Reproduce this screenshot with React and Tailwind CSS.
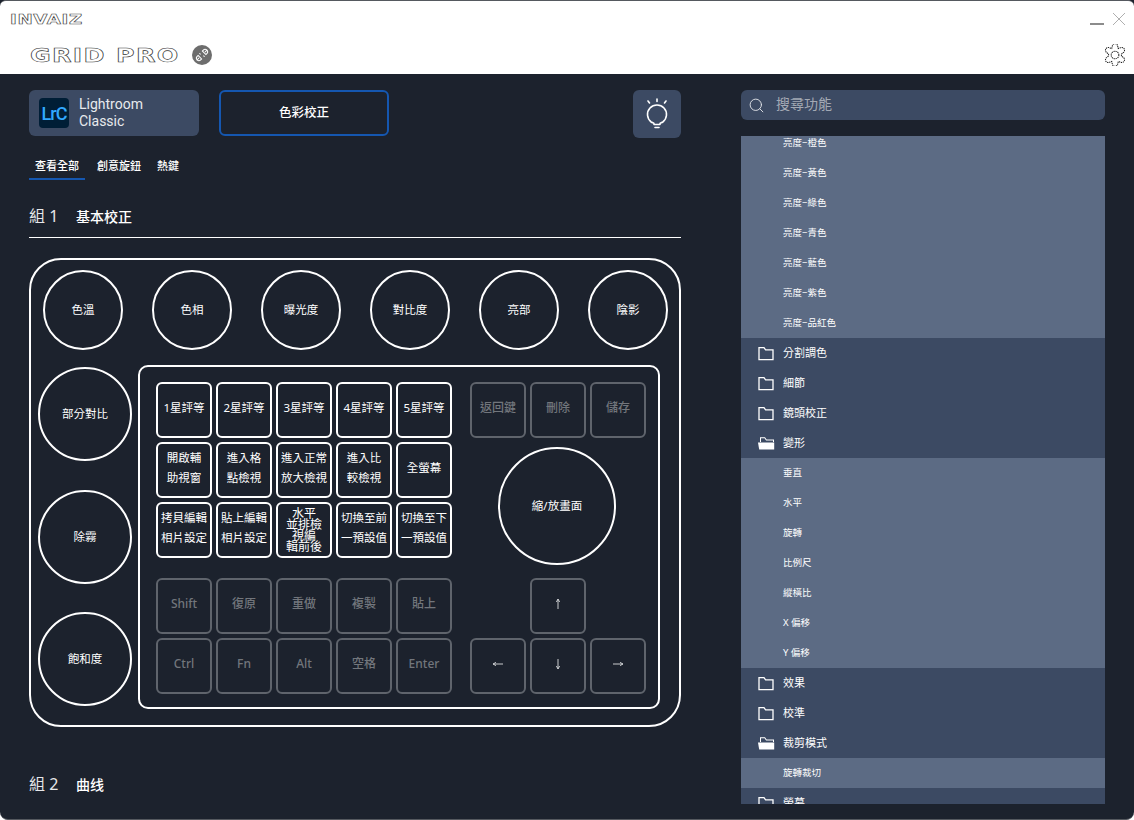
import React from "react";
import { Search } from "lucide-react";

const cjk = "font-['Noto_Sans','Noto_Sans_CJK_TC',sans-serif]";

const knobs = ["色溫", "色相", "曝光度", "對比度", "亮部", "陰影"];
const sideKnobs = ["部分對比", "除霧", "飽和度"];

const mainKeys = [
    [["1星評等"], ["2星評等"], ["3星評等"], ["4星評等"], ["5星評等"]],
    [["開啟輔", "助視窗"], ["進入格", "點檢視"], ["進入正常", "放大檢視"], ["進入比", "較檢視"], ["全螢幕"]],
    [["拷貝編輯", "相片設定"], ["貼上編輯", "相片設定"], null, ["切換至前", "一預設值"], ["切換至下", "一預設值"]],
];
const dimKeys = [
    ["Shift", "復原", "重做", "複製", "貼上"],
    ["Ctrl", "Fn", "Alt", "空格", "Enter"],
];

const listRows = [
    ["sub", "亮度−橙色"], ["sub", "亮度−黃色"], ["sub", "亮度−綠色"], ["sub", "亮度−青色"],
    ["sub", "亮度−藍色"], ["sub", "亮度−紫色"], ["sub", "亮度−品紅色"],
    ["cat", "分割調色"], ["cat", "細節"], ["cat", "鏡頭校正"], ["open", "變形"],
    ["sub", "垂直"], ["sub", "水平"], ["sub", "旋轉"], ["sub", "比例尺"], ["sub", "縱橫比"], ["sub", "X 偏移"], ["sub", "Y 偏移"],
    ["cat", "效果"], ["cat", "校準"], ["open", "裁剪模式"], ["sub", "旋轉裁切"], ["cat", "螢幕"],
];

const Key = ({ lines, dim, children }) => (
    <div className={`w-14 h-14 shrink-0 rounded-md border-2 pb-1 flex flex-col items-center justify-center leading-[20px] ${dim ? "border-[#5f646c] text-[#72767c] text-[12px] font-medium" : "border-white text-white text-[11.5px]"}`}>
        {lines && lines.map((l) => <span key={l} className="whitespace-nowrap">{l}</span>)}
        {children}
    </div>
);

const Arrow = ({ d }) => (
    <svg viewBox="0 0 16 16" className="w-4 h-4 text-[#c9cbce]" fill="none" stroke="currentColor" strokeWidth="1">
        <path d={d} />
    </svg>
);

const FolderClosed = () => (
    <svg viewBox="0 0 16 15" className="w-4 h-[15px] shrink-0" fill="none" stroke="white" strokeWidth="1.3">
        <path d="M1 13.6V1.6h5l1.6 2.2H15v9.8z" />
    </svg>
);

const FolderOpen = () => (
    <svg viewBox="0 0 17 15" className="w-[17px] h-[15px] shrink-0" fill="white">
        <path d="M2 6V1.2h5l1.6 2.2H16V6h-1V4.4H8.1L6.5 2.2H3V6z" />
        <path d="M0 6.5h16.2v6.9H1.2z" />
    </svg>
);

const Gear = () => (
    <svg viewBox="0 0 24 24" className="w-[22px] h-[22px]" fill="none" stroke="#1f1f1f" strokeWidth="1.1" strokeDasharray="1.4 0.8">
        <path d="M9 2.6a3 3 0 0 1 6 0l.6 2.3 2.3-.7a3 3 0 0 1 3 5.2L19 11v2l1.9 1.6a3 3 0 0 1-3 5.2l-2.3-.7-.6 2.3a3 3 0 0 1-6 0l-.6-2.3-2.3.7a3 3 0 0 1-3-5.2L5 13v-2L3.1 9.4a3 3 0 0 1 3-5.2l2.3.7z" />
        <circle cx="12" cy="12" r="4.2" />
    </svg>
);

const Bulb = () => (
    <svg viewBox="0 0 24 32" className="w-6 h-8" fill="none" stroke="white" strokeWidth="1.6" strokeLinecap="round">
        <path d="M12 1v2.5M3 3l1.5 2M21 3l-1.5 2" />
        <path d="M9 25.5C8.7 25 7.5 24.8 6.17 24A9.5 9.5 0 1 1 17.83 24C16.5 24.8 15.3 25 15 25.5" />
        <path d="M9 26.5h6M10 29.5h4" />
    </svg>
);

const Plug = () => (
    <div className="w-5 h-5 rounded-full bg-[#6d6d6d] flex items-center justify-center ml-3">
        <svg viewBox="0 0 16 16" className="w-3.5 h-3.5" fill="none" stroke="white" strokeWidth="1.2">
            <path d="M2 14l2.6-2.6M14 2l-2.6 2.6M6.4 7.4L5 6M9.6 8.6L11 10" />
            <path d="M3.5 8.5l4 4-1 1a2.4 2.4 0 0 1-4-4zM8.5 3.5l4 4 1-1a2.4 2.4 0 0 0-4-4z" />
        </svg>
    </div>
);

export default function App() {
    return (
        <div className={`w-[1134px] h-[820px] overflow-hidden bg-[#1c222d] flex flex-col rounded-b-[8px] border-b border-[#55595f] ${cjk}`}>
            {/* title bar */}
            <div className="h-[74px] shrink-0 bg-white border-t border-[#55595f] rounded-t-[6px] flex flex-col pl-[10px] pr-2">
                <div className="flex items-center h-[36px] justify-between">
                    <span className="text-white font-bold text-[14px] leading-none tracking-[0.5px] [-webkit-text-stroke:0.6px_#444] font-['DejaVu_Sans',sans-serif] scale-x-[1.3] origin-left">INVAIZ</span>
                    <div className="flex items-center gap-2">
                        <div className="w-[14px] h-[2px] bg-[#8c8c8c] mt-[9px]" />
                        <svg viewBox="0 0 14 14" className="w-[14px] h-[14px]" stroke="#9a9a9a" strokeWidth="0.8"><path d="M1 1l12 12M13 1L1 13" /></svg>
                    </div>
                </div>
                <div className="flex items-center justify-between pl-5 h-[36px]">
                    <div className="flex items-center">
                        <div className="w-[150px]">
                            <span className="block w-max text-white font-bold text-[19px] leading-none tracking-[1px] [-webkit-text-stroke:0.6px_#333] font-['DejaVu_Sans',sans-serif] scale-x-[1.33] origin-left">GRID PRO</span>
                        </div>
                        <Plug />
                    </div>
                    <Gear />
                </div>
            </div>

            <div className="flex flex-1 min-h-0">
                {/* left column */}
                <div className="w-[652px] ml-[29px] shrink-0 pt-4">
                    <div className="flex items-start">
                        <div className="w-[170px] h-[46px] rounded-md bg-[#3c4a63] flex items-center pl-[10px] gap-[10px]">
                            <div className="w-[30px] h-[30px] rounded-[4px] bg-[#001e36] flex items-center justify-center text-[#31a8ff] font-medium text-[18px] tracking-tighter font-['Roboto',sans-serif]">LrC</div>
                            <div className="text-[#e8eaee] text-[14px] leading-[17px] font-['Roboto',sans-serif]">Lightroom<br />Classic</div>
                        </div>
                        <div className="w-[170px] h-[46px] ml-5 rounded-md border-2 border-[#1557b0] flex items-center justify-center text-white text-[12.5px] font-medium">色彩校正</div>
                        <div className="w-12 h-12 ml-[244px] rounded-md bg-[#3c4a63] flex items-center justify-center"><Bulb /></div>
                    </div>

                    <div className="flex mt-[14px] h-[28px] text-white text-[11px] font-medium">
                        <div className="w-14 flex justify-center pt-[6px] border-b-2 border-[#1557b0]">查看全部</div>
                        <div className="ml-3 pt-[6px]">創意旋鈕</div>
                        <div className="ml-4 pt-[6px]">熱鍵</div>
                    </div>

                    <div className="flex items-center mt-[25px] h-[24px] pb-0.5 text-white">
                        <span className="text-[16px] text-[#e6e7e9] w-[47px]">組 1</span>
                        <span className="text-[14px] font-medium">基本校正</span>
                    </div>
                    <div className="h-px bg-white mt-2" />

                    {/* device */}
                    <div className="mt-5 h-[469px] rounded-[32px] border-2 border-white text-white text-[11.5px] flex flex-col">
                        <div className="flex pl-[12px] pt-[10px] gap-[29px]">
                            {knobs.map((k) => (
                                <div key={k} className="w-20 h-20 rounded-full border-2 border-white flex items-center justify-center">{k}</div>
                            ))}
                        </div>
                        <div className="flex mt-[15px] pl-[7px]">
                            <div className="flex flex-col w-[94px] gap-[28.5px] pt-[2px]">
                                {sideKnobs.map((k) => (
                                    <div key={k} className="w-[94px] h-[94px] rounded-full border-2 border-white flex items-center justify-center">{k}</div>
                                ))}
                            </div>
                            <div className="w-[522px] h-[344px] ml-[6px] rounded-[10px] border-2 border-white pl-4 pt-[15px] flex">
                                <div className="flex flex-col gap-1 w-[296px] shrink-0">
                                    {mainKeys.map((row, i) => (
                                        <div key={i} className="flex gap-1">
                                            {row.map((lines, j) => lines
                                                ? <Key key={j} lines={lines} />
                                                : (
                                                    <Key key={j}>
                                                        <div className="text-[12px] leading-[11px] text-center mt-1">水平<br />並排檢<br />視編<br />輯前後</div>
                                                    </Key>
                                                ))}
                                        </div>
                                    ))}
                                    <div className="flex flex-col gap-1 mt-4">
                                        {dimKeys.map((row, i) => (
                                            <div key={i} className="flex gap-1">
                                                {row.map((k) => <Key key={k} lines={[k]} dim />)}
                                            </div>
                                        ))}
                                    </div>
                                </div>
                                <div className="ml-[18px] flex flex-col items-center w-[176px]">
                                    <div className="flex gap-1">
                                        {["返回鍵", "刪除", "儲存"].map((k) => <Key key={k} lines={[k]} dim />)}
                                    </div>
                                    <div className="w-[118px] h-[118px] mt-[9px] mr-[2px] rounded-full border-2 border-white flex items-center justify-center">縮/放畫面</div>
                                    <div className="mt-[13px]">
                                        <Key dim><Arrow d="M8 3v10M6.4 6L8 3l1.6 3" /></Key>
                                    </div>
                                    <div className="flex gap-1 mt-1">
                                        <Key dim><Arrow d="M3 8h10M6 6.4L3 8l3 1.6" /></Key>
                                        <Key dim><Arrow d="M8 3v10M6.4 10L8 13l1.6-3" /></Key>
                                        <Key dim><Arrow d="M3 8h10M10 6.4L13 8l-3 1.6" /></Key>
                                    </div>
                                </div>
                            </div>
                        </div>
                    </div>

                    <div className="flex items-center mt-[46px] h-[24px] pb-0.5 text-white">
                        <span className="text-[16px] text-[#e6e7e9] w-[47px]">組 2</span>
                        <span className="text-[14px] font-medium">曲线</span>
                    </div>
                </div>

                {/* right column */}
                <div className="w-[364px] ml-[60px] shrink-0 pt-4 pb-[15px] flex flex-col">
                    <div className="h-[30px] shrink-0 rounded-md bg-[#3c4a63] flex items-center pl-[7px] gap-[11px]">
                        <Search size={17} strokeWidth={1.3} className="text-[#e3e5e9]" />
                        <span className="text-[14px] text-[#a3a9b4] pb-1">搜尋功能</span>
                    </div>
                    <div className="mt-4 flex-1 min-h-0 overflow-hidden">
                        <div className="-mt-2">
                            {listRows.map(([type, label], i) => (
                                type === "sub" ? (
                                    <div key={i} className="h-[30px] bg-[#5c6b84] flex items-center pl-[42px] text-white text-[9.5px]">{label}</div>
                                ) : (
                                    <div key={i} className="h-[30px] bg-[#3c4a63] flex items-center pl-[17px] text-white text-[11px]">
                                        <div className="w-[25px] flex">{type === "open" ? <FolderOpen /> : <FolderClosed />}</div>
                                        {label}
                                    </div>
                                )
                            ))}
                        </div>
                    </div>
                </div>
            </div>
        </div>
    );
}
